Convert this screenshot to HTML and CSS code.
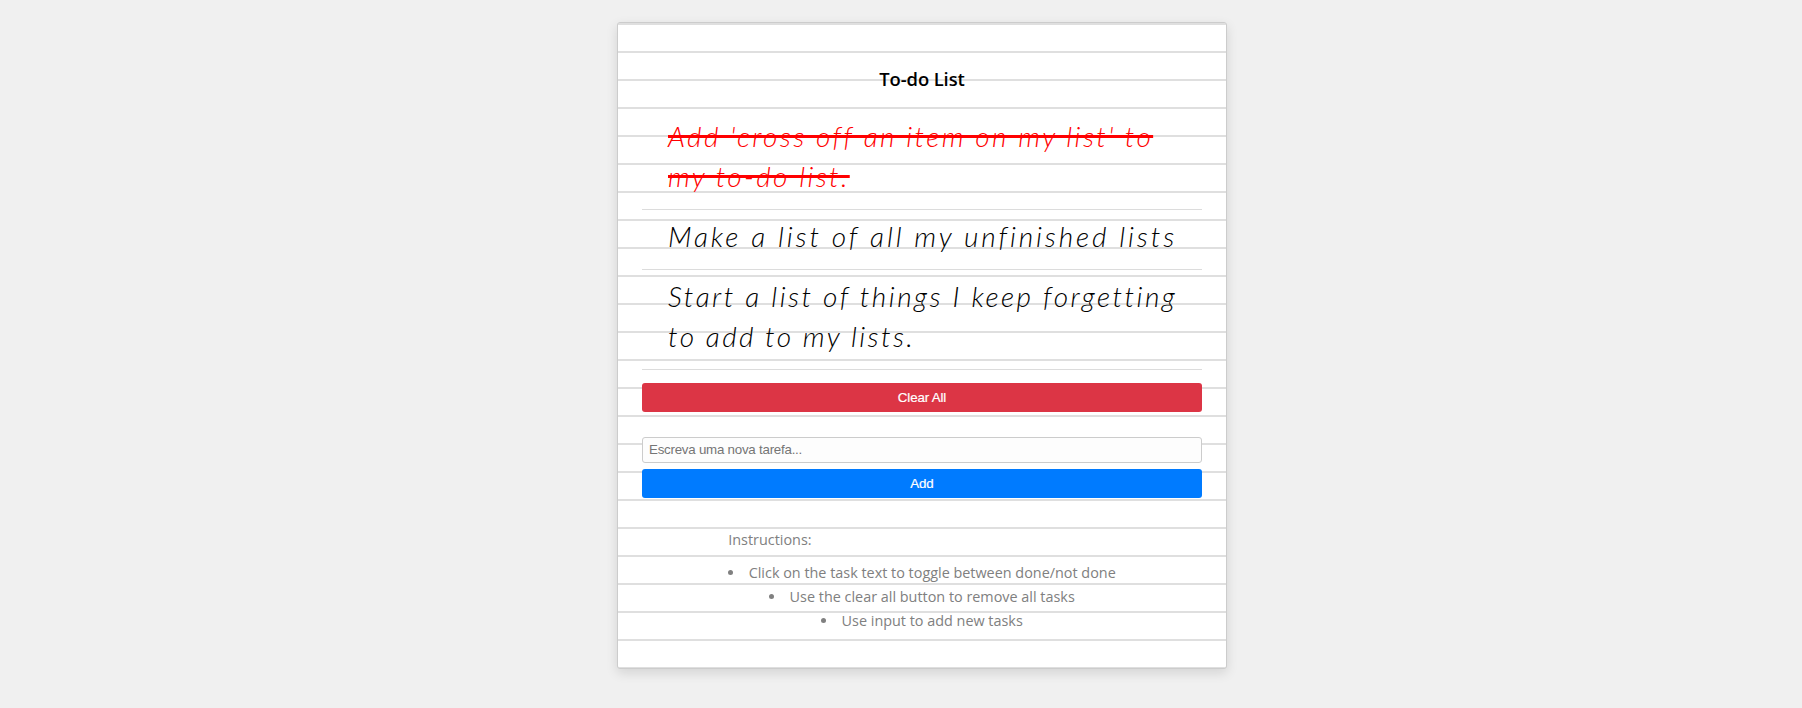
FILE: index.html
```html
<!DOCTYPE html>
<html lang="en">
<head>
<meta charset="utf-8">
<title>To-do List</title>
<link rel="stylesheet" href="styles.css">
</head>
<body>
<main class="list">
  <h1 class="title">To-do List</h1>
  <ul class="tasks">
    <li class="task done"><span class="row r1">Add 'cross off an item on my list' to</span><span class="row r2">my to-do list.</span></li>
    <li class="task"><span class="row r3">Make a list of all my unfinished lists</span></li>
    <li class="task"><span class="row r4">Start a list of things I keep forgetting</span><span class="row r5">to add to my lists.</span></li>
  </ul>
  <button class="button clear">Clear All</button>
  <form class="form">
    <input class="input" type="text" placeholder="Escreva uma nova tarefa...">
    <button class="button add" type="button">Add</button>
  </form>
  <section class="help">
    <p class="help-title">Instructions:</p>
    <ul class="help-list">
      <li>Click on the task text to toggle between done/not done</li>
      <li>Use the clear all button to remove all tasks</li>
      <li>Use input to add new tasks</li>
    </ul>
  </section>
</main>
</body>
</html>
```
FILE: styles.css
```css
* { box-sizing: border-box; }
body {
  margin: 0;
  padding: 22px 0 0 42px;
  min-height: 708px;
  background: #f0f0f0;
  font-family: "Open Sans", sans-serif;
}
.list {
  width: 610px;
  height: 647px;
  margin: 0 auto;
  padding: 36px 24px 0;
  border: 1px solid #ccc;
  border-radius: 3px;
  background: #fff repeating-linear-gradient(to bottom, #dfdfdf 0, #dfdfdf 2px, #fff 2px, #fff 28px);
  background-clip: padding-box;
  box-shadow: 0 4px 12px rgba(0, 0, 0, 0.12);
}
.title {
  margin: 0;
  height: 50px;
  font-size: 18.4px;
  line-height: 39px;
  font-weight: 600;
  letter-spacing: -0.1px;
  text-align: center;
}
.tasks { margin: 0; padding: 0; list-style: none; }
.task {
  padding: 6px 25px 13px 26px;
  border-bottom: 1px solid #dcdcdc;
  font-family: "Bradley Hand ITC", "Bradley Hand", Lato, sans-serif;
  font-style: italic;
  font-weight: 300;
  font-size: 28px;
  line-height: 40px;
  font-variant-ligatures: none;
}
.task:first-child { padding-top: 7px; }
.row { display: table; white-space: nowrap; }
.r1 { letter-spacing: 2.37px; }
.r2 { letter-spacing: 2.35px; }
.r3 { letter-spacing: 2.88px; }
.r4 { letter-spacing: 2.48px; }
.r5 { letter-spacing: 2.4px; }
.done .row {
  color: #f00;
  text-decoration: underline 3px;
  text-underline-offset: -12px;
  text-decoration-skip-ink: none;
}
.button {
  display: block;
  width: 100%;
  height: 29px;
  padding: 0;
  border: 0;
  border-radius: 3px;
  color: #fff;
  font: 13.333px "Liberation Sans", Arial, sans-serif;
  letter-spacing: -0.15px;
  -webkit-text-stroke: 0.2px #fff;
}
.clear { margin-top: 13px; background: #dc3545; }
.add { margin-top: 6px; background: #007bff; }
.form { margin: 25px 0 0; }
.input {
  display: block;
  width: 100%;
  height: 26px;
  padding: 0 6px 1px;
  border: 1px solid #ccc;
  border-radius: 3px;
  background: #fdfdfd;
  font: 13.333px "Liberation Sans", Arial, sans-serif;
  letter-spacing: -0.24px;
}
.help {
  width: max-content;
  margin: 30px auto 0;
  color: #808080;
  font-size: 14.4px;
  line-height: 24px;
}
.help-title { margin: 0 0 9px; }
.help-list { margin: 0; padding: 0; list-style: disc inside; text-align: center; }
```
